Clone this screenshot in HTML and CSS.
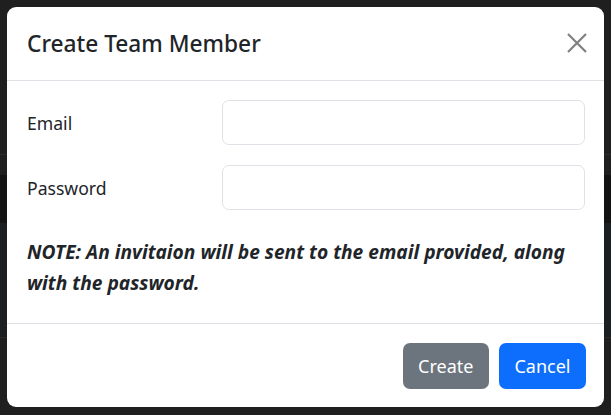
FILE: index.html
```html
<!DOCTYPE html>
<html lang="en">
<head>
<meta charset="utf-8">
<title>Create Team Member</title>
<link rel="stylesheet" href="styles.css">
</head>
<body>
<div class="modal">
  <div class="modal-header">
    <h5 class="modal-title">Create Team Member</h5>
    <button class="btn-close" type="button" aria-label="Close">
      <svg width="20" height="20" viewBox="0 0 20 20"><path d="M1 1L19 19M19 1L1 19" stroke="#808080" stroke-width="2.2" fill="none"/></svg>
    </button>
  </div>
  <div class="modal-body">
    <div class="form-grid">
      <label class="form-label" for="email">Email</label>
      <input class="form-control" id="email" type="email">
      <label class="form-label" for="password">Password</label>
      <input class="form-control" id="password" type="password">
    </div>
    <p class="note">NOTE: An invitaion will be sent to the email provided, along with the password.</p>
  </div>
  <div class="modal-footer">
    <button class="btn btn-secondary" type="button">Create</button>
    <button class="btn btn-primary" type="button">Cancel</button>
  </div>
</div>
</body>
</html>
```
FILE: styles.css
```css
html, body {
  margin: 0;
  height: 415px;
}
body {
  padding: 7px;
  box-sizing: border-box;
  font-family: "Noto Sans", "Open Sans", sans-serif;
  color: #212529;
  background:
    linear-gradient(to bottom,
      #1f1f1f 0, #1f1f1f 154px,
      #2c2c2c 154px, #2c2c2c 155px,
      #1f1f1f 155px, #1f1f1f 175px,
      #131313 175px, #131313 223px,
      #1c1f22 223px, #1c1f22 337px,
      #2a2a2a 337px, #2a2a2a 338px,
      #1f1f1f 338px, #1f1f1f 415px);
  overflow: hidden;
}
.modal {
  width: 597px;
  height: 400px;
  background: #fff;
  border-radius: 9px;
  display: flex;
  flex-direction: column;
  overflow: hidden;
}
.modal-header {
  display: flex;
  align-items: center;
  justify-content: space-between;
  padding: 19px 17px 19px 19px;
  border-bottom: 1px solid #dee2e6;
}
.modal-title {
  margin: 0;
  font-size: 22.7px;
  font-weight: 500;
  line-height: 35px;
  padding-left: 1px;
}
.btn-close {
  border: 0;
  background: none;
  padding: 0;
  width: 20px;
  height: 20px;
  display: block;
  margin-top: -2px;
}
.btn-close svg {
  display: block;
}
.modal-body {
  flex: 1;
  padding: 19px;
}
.form-grid {
  display: grid;
  grid-template-columns: 196px 1fr;
  row-gap: 20px;
  align-items: center;
}
.form-label {
  font-size: 17.6px;
  line-height: 28px;
  padding-left: 1px;
  margin-top: 1px;
}
.form-control {
  box-sizing: border-box;
  height: 45px;
  border: 1px solid #dee2e6;
  border-radius: 7px;
  background: #fff;
  margin: 0;
  font: inherit;
}
.note {
  margin: 26px 0 0;
  font-size: 19.2px;
  line-height: 31px;
  font-weight: 700;
  font-style: italic;
  padding-left: 1px;
}
.modal-footer {
  display: flex;
  justify-content: flex-end;
  gap: 10px;
  padding: 19px 18px 18px;
  border-top: 1px solid #dee2e6;
}
.btn {
  height: 46px;
  padding: 0 15.5px;
  border: 0;
  border-radius: 7px;
  font-family: inherit;
  font-size: 18px;
  color: #fff;
}
.btn-secondary {
  background: #6c757d;
}
.btn-primary {
  background: #0d6efd;
}
```
